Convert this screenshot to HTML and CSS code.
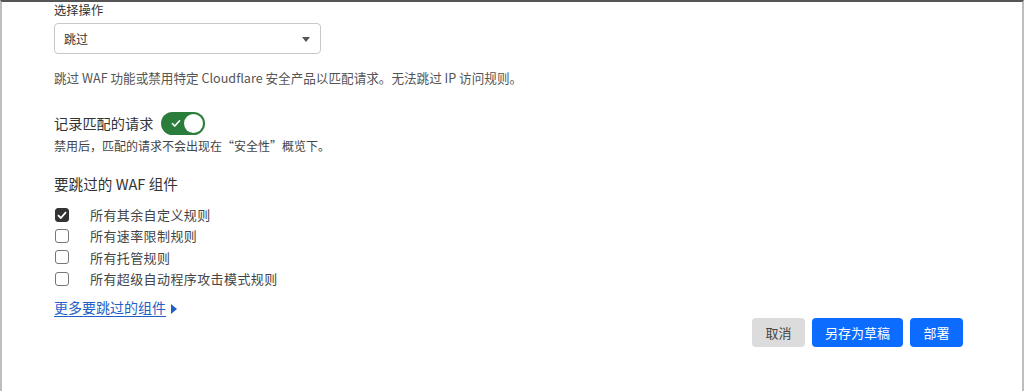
FILE: index.html
```html
<!DOCTYPE html>
<html lang="zh-CN">
<head>
<meta charset="utf-8">
<link rel="stylesheet" href="styles.css">
</head>
<body>
<div class="frame">
  <div class="content">
    <div class="field-label">选择操作</div>
    <div class="select">
      <span>跳过</span>
      <svg class="caret" width="8" height="5" viewBox="0 0 8 5"><path d="M0 0H8L4 5Z" fill="#555"/></svg>
    </div>
    <p class="desc">跳过 WAF 功能或禁用特定 Cloudflare 安全产品以匹配请求。无法跳过 IP 访问规则。</p>

    <div class="log-row">
      <span class="log-label">记录匹配的请求</span>
      <span class="toggle">
        <svg class="tick" width="10" height="8" viewBox="0 0 10 8"><path d="M1 4.2L3.8 7L9 1.2" fill="none" stroke="#fff" stroke-width="1.6"/></svg>
        <span class="knob"></span>
      </span>
    </div>
    <p class="note">禁用后，匹配的请求不会出现在“安全性”概览下。</p>

    <div class="section-title">要跳过的 WAF 组件</div>
    <ul class="checks">
      <li><span class="box checked"><svg width="10" height="8" viewBox="0 0 10 8"><path d="M1 4.2L3.8 7L9 1.2" fill="none" stroke="#fff" stroke-width="1.8"/></svg></span>所有其余自定义规则</li>
      <li><span class="box"></span>所有速率限制规则</li>
      <li><span class="box"></span>所有托管规则</li>
      <li><span class="box"></span>所有超级自动程序攻击模式规则</li>
    </ul>
    <a class="more" href="#">更多要跳过的组件</a><svg class="more-arrow" width="6" height="10" viewBox="0 0 6 10"><path d="M0 0L6 5L0 10Z" fill="#1f5fc6"/></svg>

    <div class="actions">
      <button class="btn cancel">取消</button>
      <button class="btn primary draft">另存为草稿</button>
      <button class="btn primary deploy">部署</button>
    </div>
  </div>
</div>
</body>
</html>
```

FILE: styles.css
```css
* { box-sizing: border-box; }
html, body { margin: 0; padding: 0; background: #fff; }
body {
  font-family: "Noto Sans CJK SC", "Open Sans", sans-serif;
  color: #333;
}
.frame {
  width: 1024px;
  height: 391px;
  border-top: 2px solid #555;
  border-left: 2px solid #bdbdbd;
  border-right: 2px solid #bdbdbd;
  overflow: hidden;
}
.content {
  padding: 0 0 0 52px;
  width: 1020px;
}
.field-label {
  font-size: 12.3px;
  line-height: 17px;
  color: #333;
}
.select {
  margin-top: 4px;
  width: 267px;
  height: 31px;
  border: 1px solid #c8c8c8;
  border-radius: 4px;
  display: flex;
  align-items: center;
  justify-content: space-between;
  padding: 0 10px 0 9px;
  font-size: 12px;
  color: #333;
}
.caret { margin-top: 1px; }
.desc {
  margin: 15px 0 0;
  font-size: 12.6px;
  line-height: 18px;
  color: #555;
}
.log-row {
  margin-top: 24px;
  display: flex;
  align-items: center;
  height: 24px;
}
.log-label {
  font-size: 14.2px;
  color: #333;
}
.toggle {
  margin-left: 8px;
  width: 44px;
  height: 23px;
  border-radius: 12px;
  background: #2a7d3a;
  display: flex;
  align-items: center;
  justify-content: space-between;
  padding: 0 2px 0 10px;
}
.knob {
  width: 19px;
  height: 19px;
  border-radius: 50%;
  background: #fff;
}
.note {
  margin: 2px 0 0;
  font-size: 12px;
  line-height: 18px;
  color: #444;
}
.section-title {
  margin-top: 19px;
  font-size: 14.6px;
  line-height: 20px;
  color: #333;
}
.checks {
  list-style: none;
  margin: 10px 0 0;
  padding: 0;
}
.checks li {
  display: flex;
  align-items: center;
  height: 21.3px;
  font-size: 13px;
  letter-spacing: 0.4px;
  color: #444;
}
.box {
  width: 14px;
  height: 14px;
  border: 1px solid #777;
  border-radius: 3px;
  margin: 0 21px 0 1px;
  display: flex;
  align-items: center;
  justify-content: center;
}
.box.checked {
  background: #333;
  border-color: #333;
}
.more {
  display: inline-block;
  margin-top: 8px;
  font-size: 14px;
  line-height: 20px;
  color: #1f5fc6;
  text-decoration: underline;
  text-underline-offset: 3px;
}
.more-arrow { margin-left: 5px; vertical-align: -1px; }
.actions {
  display: flex;
  gap: 7px;
  margin: 0 0 0 698px;
}
.btn {
  height: 29px;
  border: none;
  border-radius: 4px;
  font-family: inherit;
  font-size: 13px;
  padding: 0;
  cursor: pointer;
}
.btn.cancel {
  background: #dcdcdc;
  color: #444;
  width: 53px;
}
.btn.primary {
  background: #0b6cff;
  color: #fff;
}
.btn.draft { width: 91px; }
.btn.deploy { width: 53px; }
```
